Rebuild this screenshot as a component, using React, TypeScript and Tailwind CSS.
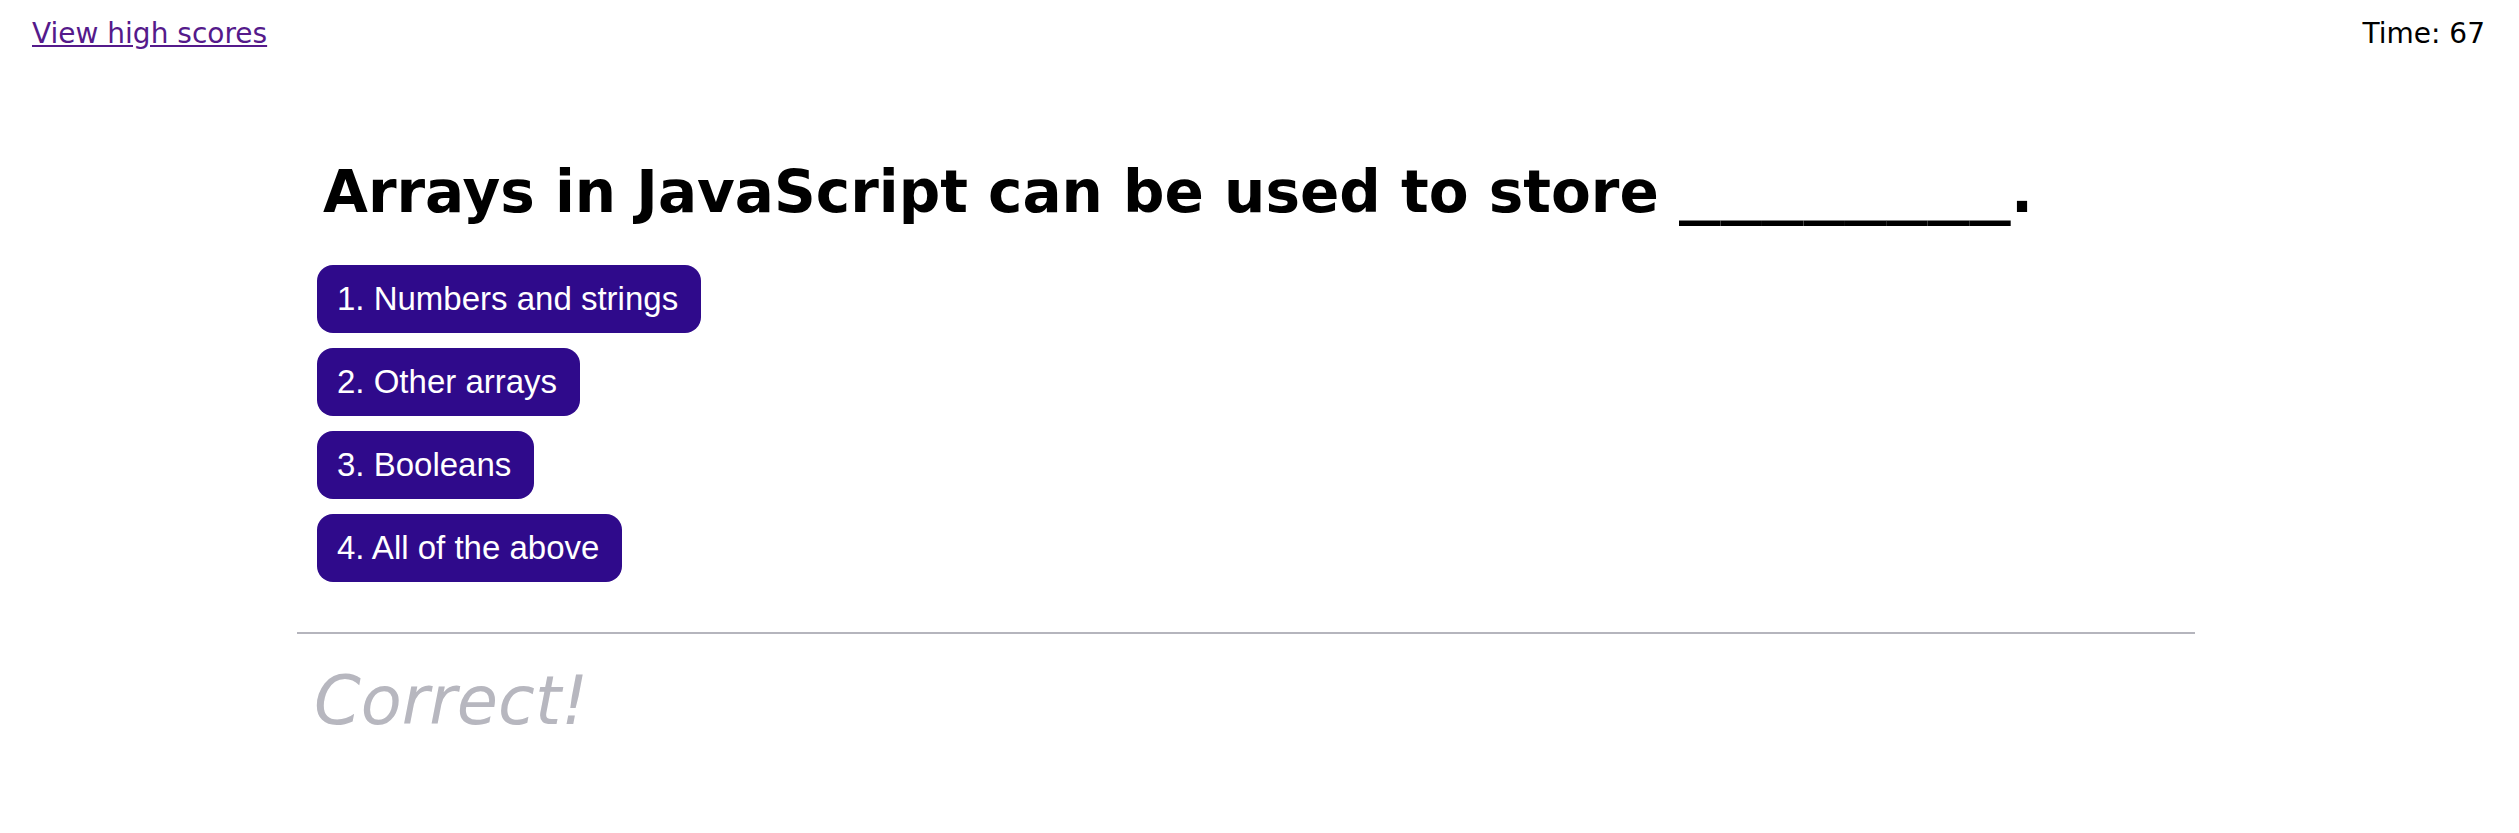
import React from 'react';

const choices = ['1. Numbers and strings', '2. Other arrays', '3. Booleans', '4. All of the above'];

const App: React.FC = () => {
  return (
    <div className="min-h-screen bg-white text-black font-['DejaVu_Sans',Verdana,sans-serif]">
      <header className="flex justify-between items-start pl-[32px] pr-[34px] pt-[17px] text-[28px] leading-[33px]">
        <a href="#" className="text-[#551a8b] underline">View high scores</a>
        <span>Time: 67</span>
      </header>

      <main className="ml-[297px] w-[1898px]">
        <section className="pl-[20px] mt-[109px]">
          <h1 className="ml-[6px] text-[58px] leading-[67px] font-bold whitespace-nowrap">
            Arrays in JavaScript can be used to store{' '}
            <span className="inline-block w-[332px]">
              <span className="inline-block origin-left scale-x-[1.43]">________</span>
            </span>
            .
          </h1>

          <div className="mt-[39px] flex flex-col items-start gap-[15px]">
            {choices.map(c => (
              <button
                key={c}
                className="h-[68px] pl-[20px] pr-[23px] rounded-[16px] bg-[#2f0a8b] text-white text-[33px] leading-[38px] font-['Liberation_Sans',Arial,sans-serif]"
              >
                {c}
              </button>
            ))}
          </div>
        </section>

        <div className="mt-[50px] border-t-2 border-[#b5b5bd]"></div>

        <p className="mt-[28px] pl-[17px] text-[67px] leading-[78px] italic text-[#b7b7bf]">Correct!</p>
      </main>
    </div>
  );
};

export default App;
